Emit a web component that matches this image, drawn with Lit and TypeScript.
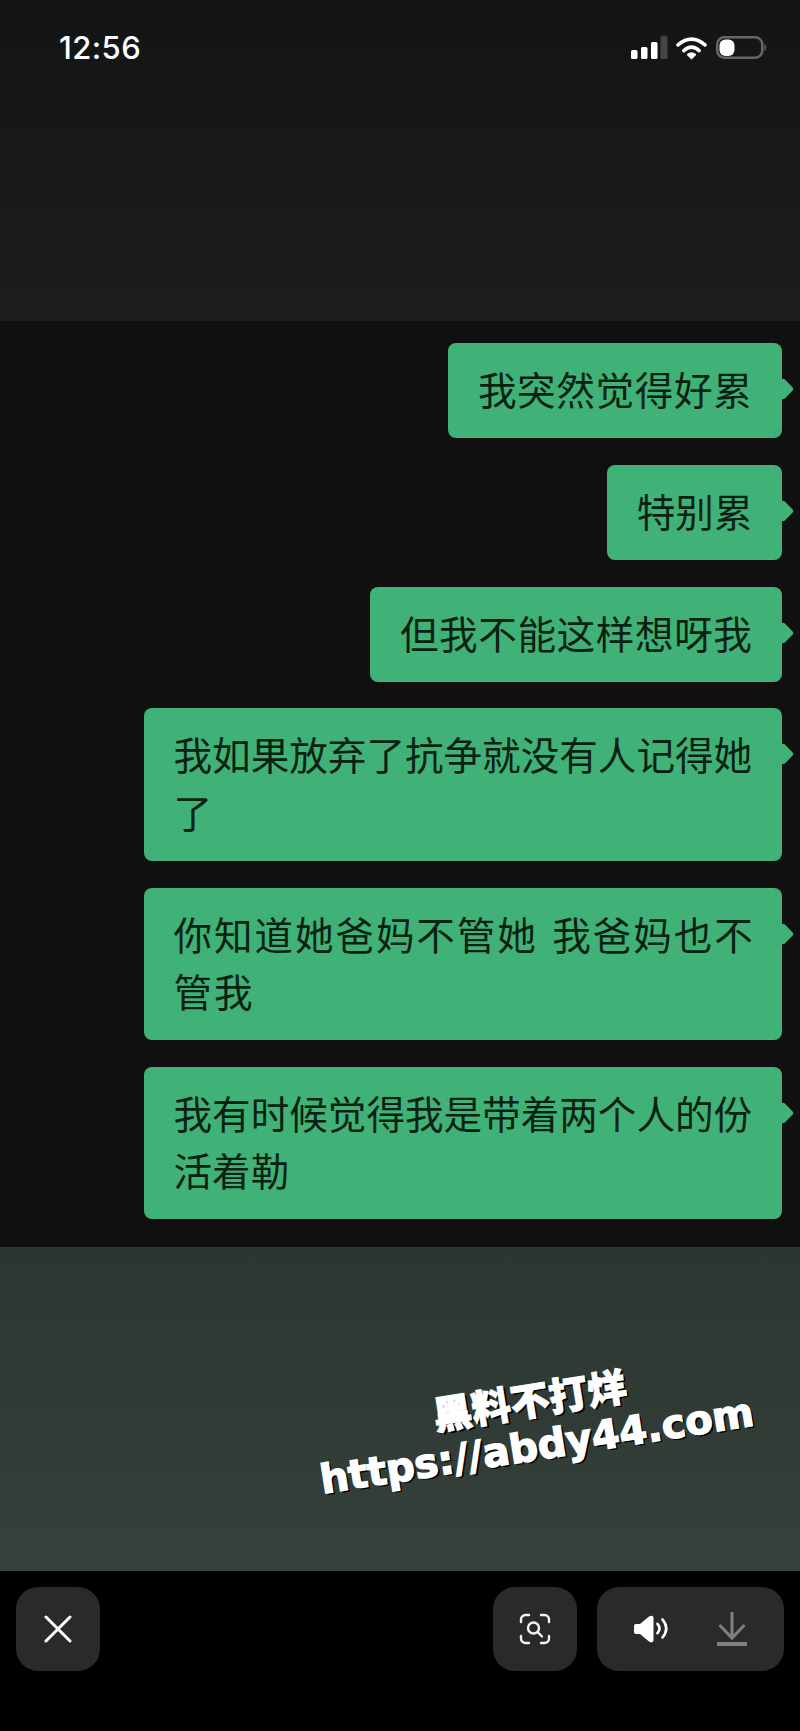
import {css, html, LitElement} from 'lit';
import {customElement} from 'lit/decorators.js';

// spacing: per bubble tracking, the screenshot's glyph pitch differs a bit between rows
const messages = [
    {text: '我突然觉得好累', spacing: 0.65},
    {text: '特别累', spacing: 0},
    {text: '但我不能这样想呀我', spacing: 0.6},
    {text: '我如果放弃了抗争就没有人记得她了', spacing: 0},
    {text: '你知道她爸妈不管她 我爸妈也不管我', spacing: 1.9, wide: true},
    {text: '我有时候觉得我是带着两个人的份活着勒', spacing: 0},
];

@customElement("app-root")
export class AppRoot extends LitElement {

    static styles = css`
        :host {
            display: flex;
            flex-direction: column;
            width: 800px;
            height: 1731px;
            overflow: hidden;
            background: #000;
            font-family: "Noto Sans CJK SC", "Noto Sans", sans-serif;
        }

        .top {
            display: flex;
            justify-content: space-between;
            align-items: flex-start;
            flex: none;
            box-sizing: border-box;
            height: 321px;
            padding: 36px 32px 0 59px;
            background: linear-gradient(#131515, #1c1e1d);
        }

        .time {
            font: 500 31px/24px Inter, "Liberation Sans", sans-serif;
            letter-spacing: 0.4px;
            color: #fff;
        }

        .chat {
            display: flex;
            flex-direction: column;
            align-items: flex-end;
            flex: none;
            gap: 26.8px;
            padding: 22px 18px 27.5px;
            background: #101011;
        }

        .bubble {
            position: relative;
            box-sizing: border-box;
            max-width: 638px;
            padding: 17px 29.5px 20.5px;
            border-radius: 8px;
            background: #40b277;
            color: #0a2213;
            font-size: 38.6px;
            line-height: 57.5px;
        }

        .bubble.wide {
            padding-right: 26px;
            word-spacing: 4px;
        }

        .bubble::after {
            content: "";
            position: absolute;
            top: 38px;
            right: -9px;
            width: 16px;
            height: 16px;
            border-radius: 3px;
            background: #40b277;
            transform: rotate(45deg);
        }

        .lower {
            position: relative;
            flex: 1;
            background: linear-gradient(#2c3532, #35413a);
        }

        .watermark {
            position: absolute;
            left: 283px;
            top: 127px;
            width: 500px;
            transform: rotate(-9deg);
            text-align: center;
            color: #fff;
            line-height: 48px;
            white-space: nowrap;
            text-shadow: 2px 2px 0 #000;
        }

        .watermark .cn {
            font-size: 39px;
            font-weight: 900;
            -webkit-text-stroke: 1px #fff;
        }

        .watermark .url {
            font-family: "DejaVu Sans", sans-serif;
            font-size: 40px;
            font-weight: 700;
            -webkit-text-stroke: 1.4px #fff;
        }

        .bar {
            display: flex;
            gap: 20px;
            flex: none;
            box-sizing: border-box;
            height: 160px;
            padding: 16px;
            background: #000;
        }

        .button {
            display: flex;
            align-items: center;
            justify-content: center;
            flex: none;
            width: 84px;
            height: 84px;
            border-radius: 22px;
            background: #2a2a2a;
        }

        .button.close {
            margin-right: auto;
        }

        .button.group {
            justify-content: flex-start;
            gap: 47px;
            width: 187px;
            padding-left: 37px;
            box-sizing: border-box;
        }

        svg {
            display: block;
        }
    `;

    private statusIcons() {
        return html`
            <svg width="137" height="24" viewBox="0 0 137 24">
                <g fill="#fff">
                    <rect x="0" y="14" width="6.5" height="9" rx="1.5"/>
                    <rect x="10" y="11" width="6.5" height="12" rx="1.5"/>
                    <rect x="20" y="6" width="6.5" height="17" rx="1.5"/>
                </g>
                <rect x="29.5" y="0" width="7" height="23" rx="1.5" fill="#444"/>
                <g fill="none" stroke="#fff" stroke-width="3.6" stroke-linecap="round">
                    <path d="M47 8.8Q60.5 -2.5 74 8.8"/>
                    <path d="M52.8 14.6Q60.5 7.8 68.2 14.6"/>
                </g>
                <path d="M56 18.6Q60.5 15 65 18.6L60.5 23Z" fill="#fff" stroke="#fff" stroke-linejoin="round"/>
                <rect x="86.25" y="1.25" width="45" height="20.5" rx="7" fill="none" stroke="#666" stroke-width="2.5"/>
                <rect x="88.5" y="3.5" width="15" height="16.5" rx="6" fill="#fff"/>
                <path d="M133.5 7.5Q136.8 11.5 133.5 15.5Z" fill="#666"/>
            </svg>`;
    }

    render() {
        return html`
            <div class="top">
                <div class="time">12:56</div>
                ${this.statusIcons()}
            </div>
            <div class="chat">
                ${messages.map((m) => html`<div class="bubble ${m.wide ? 'wide' : ''}" style="letter-spacing:${m.spacing}px">${m.text}</div>`)}
            </div>
            <div class="lower">
                <div class="watermark">
                    <div class="cn">黑料不打烊</div>
                    <div class="url">https://abdy44.com</div>
                </div>
            </div>
            <div class="bar">
                <div class="button close">
                    <svg width="28" height="28" viewBox="0 0 28 28" fill="none" stroke="#fff" stroke-width="3" stroke-linecap="round">
                        <path d="M2 2L26 26M26 2L2 26"/>
                    </svg>
                </div>
                <div class="button">
                    <svg width="32" height="32" viewBox="0 0 32 32" fill="none" stroke="#f2f2f2" stroke-width="2.4" stroke-linecap="round">
                        <path d="M2 9V6.500a4.500 4.500 0 0 1 4.500-4.500H10M22 2h3.500A4.500 4.500 0 0 1 30 6.500V9M30 23v2.500a4.500 4.500 0 0 1-4.500 4.500H22M10 30H6.500A4.500 4.500 0 0 1 2 25.500V23"/>
                        <circle cx="14.500" cy="15" r="5.500"/>
                        <path d="M18.700 19.200L23 23.500"/>
                    </svg>
                </div>
                <div class="button group">
                    <svg width="36" height="28" viewBox="0 0 36 28" fill="none">
                        <path d="M0 11c0-1.200.8-2 2-2h4L15 1.500C17 0 19.500.500 19.500 3v22c0 2.500-2.500 3-4.500 1.500L6 19H2c-1.200 0-2-.8-2-2z" fill="#fff"/>
                        <path d="M23.500 8.800Q27.500 13.500 23.500 18.200M28.500 4.500Q36 13.500 28.500 22.500" stroke="#fff" stroke-width="2.600" stroke-linecap="round"/>
                    </svg>
                    <svg width="30" height="35" viewBox="0 0 30 35" fill="none" stroke="#808080" stroke-width="3">
                        <path d="M15 0V26M2.500 13L15 26L27.500 13"/>
                        <path d="M0 32H30" stroke-width="4"/>
                    </svg>
                </div>
            </div>
        `;
    }
}
